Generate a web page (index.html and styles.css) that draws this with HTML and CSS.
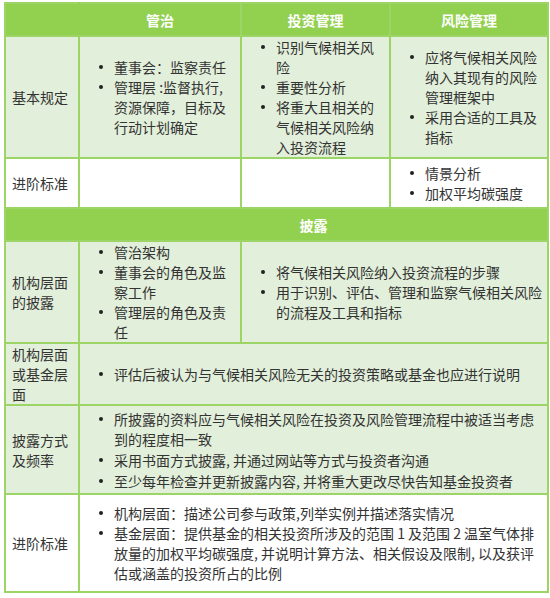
FILE: index.html
```html
<!DOCTYPE html>
<html lang="zh-CN">
<head>
<meta charset="utf-8">
<title>气候相关风险管理</title>
<link rel="stylesheet" href="styles.css">
</head>
<body>
<table class="grid">
  <colgroup>
    <col class="c1"><col class="c2"><col class="c3"><col class="c4">
  </colgroup>
  <tr class="head h-top">
    <th></th><th>管治</th><th>投资管理</th><th>风险管理</th>
  </tr>
  <tr class="tint r1">
    <td class="label">基本规定</td>
    <td><ul><li>董事会：监察责任</li><li>管理层 :监督执行,资源保障，目标及行动计划确定</li></ul></td>
    <td><ul><li>识别气候相关风险</li><li>重要性分析</li><li>将重大且相关的气候相关风险纳入投资流程</li></ul></td>
    <td><ul><li>应将气候相关风险纳入其现有的风险管理框架中</li><li>采用合适的工具及指标</li></ul></td>
  </tr>
  <tr class="plain r2">
    <td class="label">进阶标准</td>
    <td></td>
    <td></td>
    <td><ul><li>情景分析</li><li>加权平均碳强度</li></ul></td>
  </tr>
  <tr class="head h-mid">
    <th></th><th colspan="3">披露</th>
  </tr>
  <tr class="tint r4">
    <td class="label">机构层面的披露</td>
    <td><ul><li>管治架构</li><li>董事会的角色及监察工作</li><li>管理层的角色及责任</li></ul></td>
    <td colspan="2"><ul><li>将气候相关风险纳入投资流程的步骤</li><li>用于识别、评估、管理和监察气候相关风险的流程及工具和指标</li></ul></td>
  </tr>
  <tr class="tint r5">
    <td class="label">机构层面或基金层面</td>
    <td colspan="3"><ul><li>评估后被认为与气候相关风险无关的投资策略或基金也应进行说明</li></ul></td>
  </tr>
  <tr class="tint r6">
    <td class="label">披露方式及频率</td>
    <td colspan="3"><ul class="spaced"><li>所披露的资料应与气候相关风险在投资及风险管理流程中被适当考虑到的程度相一致</li><li>采用书面方式披露, 并通过网站等方式与投资者沟通</li><li>至少每年检查并更新披露内容, 并将重大更改尽快告知基金投资者</li></ul></td>
  </tr>
  <tr class="plain r7">
    <td class="label">进阶标准</td>
    <td colspan="3"><ul><li>机构层面：描述公司参与政策,列举实例并描述落实情况</li><li>基金层面：提供基金的相关投资所涉及的范围 1 及范围 2 温室气体排放量的加权平均碳强度, 并说明计算方法、相关假设及限制, 以及获评估或涵盖的投资所占的比例</li></ul></td>
  </tr>
</table>
</body>
</html>
```
FILE: styles.css
```css
html, body {
  margin: 0;
  padding: 0;
  background: #ffffff;
}
body {
  padding: 2px 0 0 4px;
  font-family: "Noto Sans CJK SC", "Noto Sans", sans-serif;
  font-size: 14px;
  line-height: 20px;
  color: #333333;
}
.grid {
  border-collapse: collapse;
  table-layout: fixed;
  width: 543px;
}
.c1 { width: 74px; }
.c2 { width: 162px; }
.c3 { width: 149px; }
.c4 { width: 158px; }

.grid th, .grid td {
  border: 2px solid #9dd466;
  padding: 0 4px 0 6px;
  vertical-align: middle;
  text-align: left;
}
.grid td.label { padding-right: 7px; }
.head th {
  background: #92d050;
  color: #ffffff;
  font-weight: bold;
  text-align: center;
  height: 31px;
  padding: 0;
}
.head th:first-child { border-right-color: #92d050; }
.tint td { background: #e2efda; }
.plain td { background: #ffffff; }

.label {
  text-align: justify;
}

.r1 td { height: 120px; }
.r2 td { height: 48px; }
.r4 td { height: 99px; }
.r5 td { height: 59px; }
.r6 td { height: 87px; }
.r7 td { height: 96px; }

.grid ul {
  margin: 0;
  padding: 0 0 0 28px;
  list-style: none;
}
.grid li {
  position: relative;
}
.grid li::before {
  content: "";
  position: absolute;
  left: -15px;
  top: 8px;
  width: 4px;
  height: 4px;
  border-radius: 50%;
  background: #222222;
}
.spaced li + li { margin-top: 1px; }
```
